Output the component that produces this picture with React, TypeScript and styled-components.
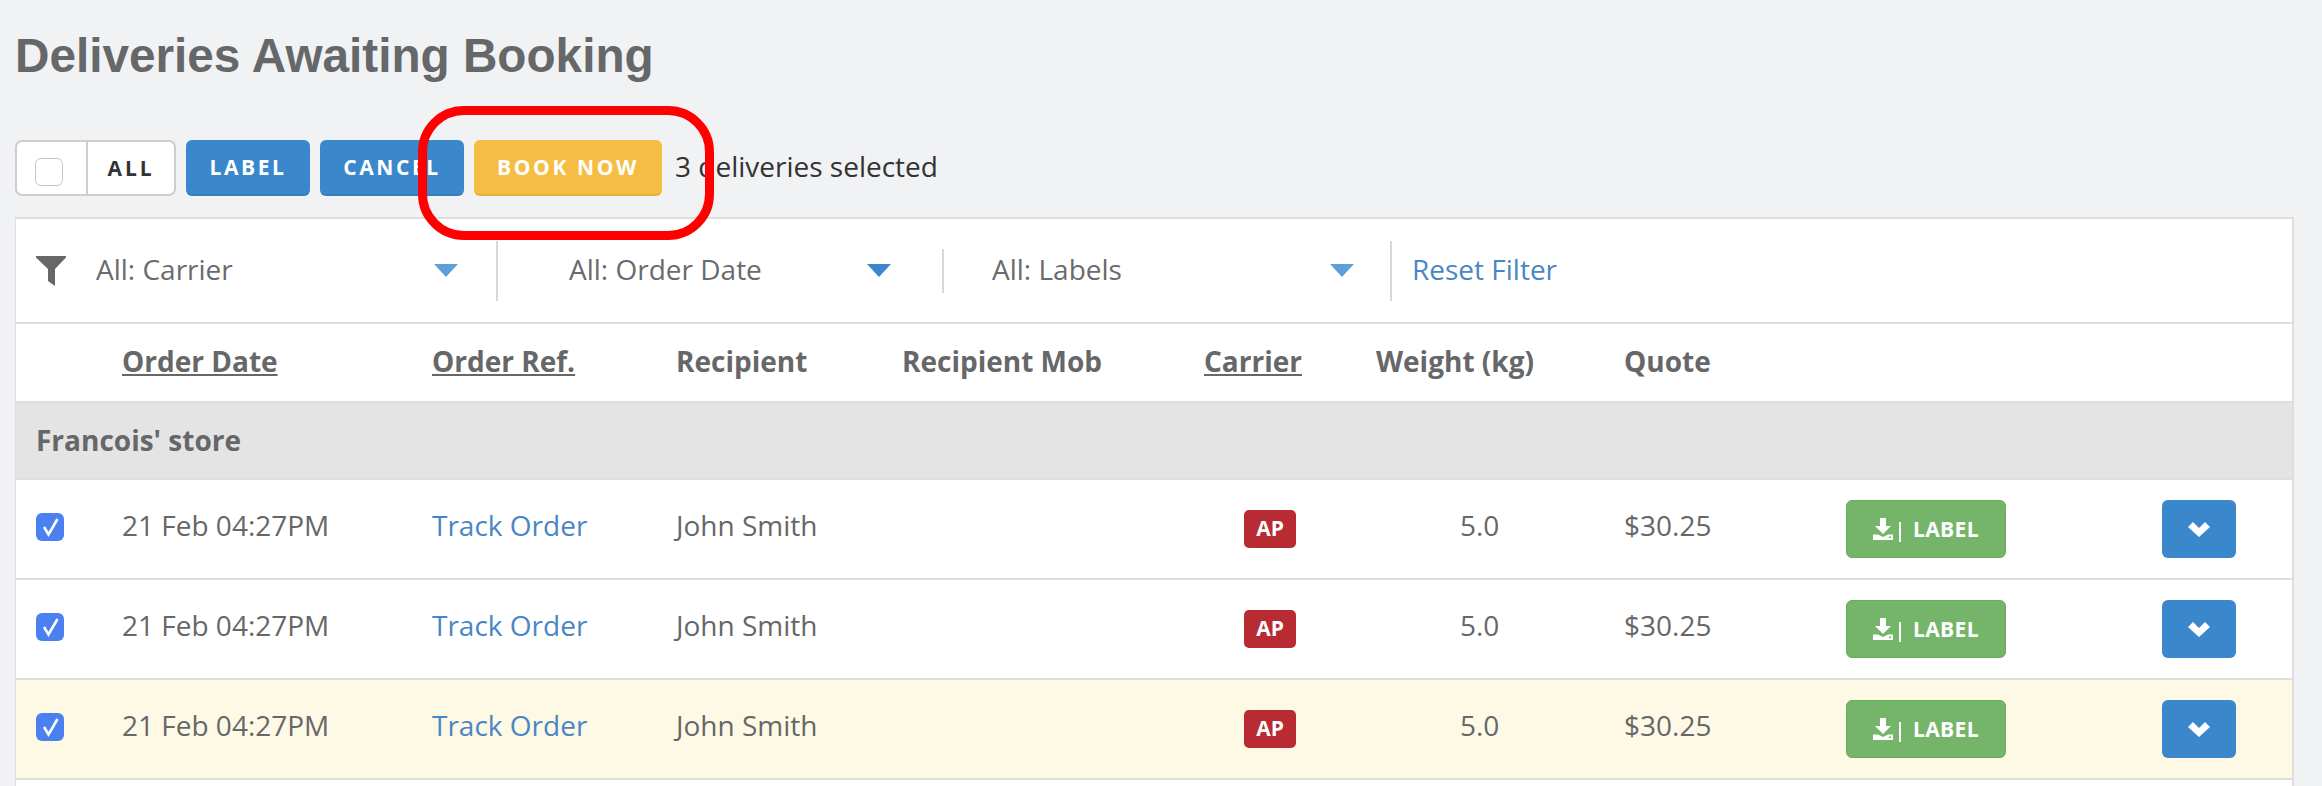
import React from "react";
import styled, { createGlobalStyle } from "styled-components";

const Global = createGlobalStyle`
  html, body { margin: 0; padding: 0; background: #f1f2f4; }
  body { font-family: "Open Sans", "Liberation Sans", sans-serif; color: #666769; overflow: hidden; }
`;

const Page = styled.div`
  position: relative;
  width: 2322px;
  height: 786px;
  box-sizing: border-box;
  padding: 0 28px 0 15px;
  overflow: hidden;
`;

const Title = styled.h1`
  margin: 0;
  padding-top: 28px;
  height: 140px;
  box-sizing: border-box;
  font: bold 47.7px/56px "Liberation Sans", Arial, sans-serif;
  color: #666769;
`;

const Toolbar = styled.div`
  display: flex;
  align-items: center;
  gap: 10px;
  height: 56px;
  margin-bottom: 21px;
`;

const AllToggle = styled.div`
  display: flex;
  width: 161px;
  height: 56px;
  box-sizing: border-box;
  background: #fff;
  border: 2px solid #cdcdcd;
  border-radius: 7px;
`;

const ToggleBox = styled.div`
  width: 71px;
  box-sizing: border-box;
  padding: 8px 5px 0 0;
  display: flex;
  align-items: center;
  justify-content: center;
  border-right: 2px solid #cdcdcd;
`;

const ToggleLabel = styled.div`
  flex: 1;
  display: flex;
  align-items: center;
  justify-content: center;
  font-size: 21px;
  font-weight: 700;
  letter-spacing: 3px;
  color: #333;
`;

const Check = styled.span<{ $on?: boolean }>`
  display: inline-flex;
  align-items: center;
  justify-content: center;
  width: 28px;
  height: 28px;
  box-sizing: border-box;
  border-radius: 6px;
  color: #fff;
  background: ${(p) => (p.$on ? "#4a80ef" : "#fff")};
  border: ${(p) => (p.$on ? "none" : "1.5px solid #c6c6c6")};
`;

const ActionButton = styled.div<{ $w: number; $bg: string }>`
  width: ${(p) => p.$w}px;
  height: 56px;
  display: flex;
  align-items: center;
  justify-content: center;
  box-sizing: border-box;
  border-radius: 6px;
  background: ${(p) => p.$bg};
  border-bottom: 2px solid rgba(0, 0, 0, 0.08);
  color: #fff;
  font-size: 21px;
  font-weight: 700;
  letter-spacing: 2.6px;
`;

const Selected = styled.div`
  margin-left: 3px;
  font-size: 28px;
  color: #333;
  padding-bottom: 4px;
`;

const Panel = styled.div`
  background: #fff;
  border: 2px solid #dedede;
  border-left-width: 1px;
  border-bottom: none;
  height: 600px;
`;

const FilterBar = styled.div`
  display: flex;
  align-items: center;
  height: 103px;
  border-bottom: 2px solid #dedede;
`;

const FilterIcon = styled.div`
  width: 80px;
  padding-left: 20px;
  box-sizing: border-box;
  display: flex;
`;

const FilterCell = styled.div<{ $w: number; $pad: number; $caretRight: number }>`
  position: relative;
  width: ${(p) => p.$w}px;
  padding-left: ${(p) => p.$pad}px;
  padding-right: ${(p) => p.$caretRight}px;
  box-sizing: border-box;
  display: flex;
  align-items: center;
  justify-content: space-between;
  font-size: 28px;
  color: #6a6b6d;
  padding-bottom: 3px;
`;

const Caret = styled.span<{ $c: string }>`
  display: block;
  width: 0;
  height: 0;
  border-left: 12px solid transparent;
  border-right: 12px solid transparent;
  border-top: 13px solid ${(p) => p.$c};
  margin-top: 2px;
`;

const Divider = styled.div<{ $h: number }>`
  width: 2px;
  height: ${(p) => p.$h}px;
  background: #d8d8d8;
  flex: none;
`;

const ResetLink = styled.a`
  margin-left: 20px;
  font-size: 28px;
  color: #4a86c5;
  padding-bottom: 3px;
`;

const COLUMNS = "106px 310px 244px 226px 302px 172px 248px 222px 316px 130px";

const HeaderRow = styled.div`
  display: grid;
  grid-template-columns: ${COLUMNS};
  align-items: center;
  height: 77px;
  border-bottom: 2px solid #dedede;
`;

const HeadCell = styled.div<{ $col: number; $link?: boolean }>`
  grid-column: ${(p) => p.$col};
  font-size: 28px;
  font-weight: 700;
  color: #666769;
  text-decoration: ${(p) => (p.$link ? "underline" : "none")};
  white-space: nowrap;
  padding-bottom: 3px;
`;

const GroupRow = styled.div`
  display: flex;
  align-items: center;
  height: 77px;
  box-sizing: border-box;
  padding: 0 0 2px 20px;
  background: #e4e4e4;
  border-bottom: 2px solid #dedede;
  font-size: 28px;
  font-weight: 700;
  color: #666769;
`;

const Row = styled.div<{ $bg: string }>`
  display: grid;
  grid-template-columns: ${COLUMNS};
  align-items: center;
  height: 100px;
  box-sizing: border-box;
  background: ${(p) => p.$bg};
  border-bottom: 2px solid #dedede;
`;

const CheckCell = styled.div`
  padding: 0 0 4px 20px;
  display: flex;
`;

const TextCell = styled.div<{ $indent?: number }>`
  font-size: 28px;
  color: #666769;
  padding-left: ${(p) => p.$indent ?? 0}px;
  padding-bottom: 8px;
  white-space: nowrap;
`;

const TrackLink = styled.a`
  font-size: 28px;
  color: #4a86c5;
  padding-bottom: 8px;
`;

const CarrierCell = styled.div`
  padding-left: 40px;
`;

const CarrierBadge = styled.div`
  width: 52px;
  height: 38px;
  display: flex;
  align-items: center;
  justify-content: center;
  box-sizing: border-box;
  padding-bottom: 2px;
  border-radius: 5px;
  background: #b92b32;
  color: #fff;
  font-size: 21px;
  font-weight: 700;
`;

const LabelButton = styled.div`
  width: 160px;
  height: 58px;
  display: flex;
  align-items: center;
  justify-content: center;
  gap: 6px;
  box-sizing: border-box;
  border: 1.5px solid #6bab5f;
  border-radius: 6px;
  background: #75b569;
  color: #fff;
  font-size: 21px;
  font-weight: 700;
  letter-spacing: 0.4px;
`;

const Pipe = styled.span`
  width: 2px;
  height: 20px;
  background: #fff;
  margin-right: 6px;
  margin-top: 5px;
`;

const ExpandButton = styled.div`
  width: 74px;
  height: 58px;
  display: flex;
  align-items: center;
  justify-content: center;
  box-sizing: border-box;
  border-radius: 6px;
  background: #3b87cb;
`;

const Annotation = styled.div`
  position: absolute;
  left: 418px;
  top: 106px;
  width: 296px;
  height: 134px;
  box-sizing: border-box;
  border: 9px solid #ff0000;
  border-radius: 46px;
  pointer-events: none;
`;

const ROWS = ["#ffffff", "#ffffff", "#fef9e5"];

const FunnelIcon = () => (
  <svg width="30" height="30" viewBox="0 0 30 30" fill="#666769">
    <path d="M0 0H30V1.5L19 13V30L12 25V13L0 1.5Z" />
  </svg>
);

const TickIcon = () => (
  <svg width="28" height="28" viewBox="0 0 28 28" fill="none" stroke="#fff" strokeWidth="2.6">
    <path d="M8 14L12.5 21.5L21.5 6" />
  </svg>
);

const DownloadIcon = () => (
  <svg width="20" height="22" viewBox="0 0 20 22" fill="#fff" fillRule="evenodd">
    <path d="M7 0H13V8H18L10 16L2 8H7Z" />
    <path d="M0 16.5H5L10 19L15 16.5H20V22H0ZM16 18.5V20H18V18.5Z" />
  </svg>
);

const ChevronIcon = () => (
  <svg width="22" height="15" viewBox="0 0 22 15" fill="#fff">
    <path d="M0 5L5 0L11 6L17 0L22 5L11 15Z" />
  </svg>
);

export default function App() {
  return (
    <Page>
      <Global />
      <Title>Deliveries Awaiting Booking</Title>
      <Toolbar>
        <AllToggle>
          <ToggleBox>
            <Check />
          </ToggleBox>
          <ToggleLabel>ALL</ToggleLabel>
        </AllToggle>
        <ActionButton $w={124} $bg="#3b87cb">LABEL</ActionButton>
        <ActionButton $w={144} $bg="#3b87cb">CANCEL</ActionButton>
        <ActionButton $w={188} $bg="#f6bd44">BOOK NOW</ActionButton>
        <Selected>3 deliveries selected</Selected>
      </Toolbar>
      <Panel>
        <FilterBar>
          <FilterIcon>
            <FunnelIcon />
          </FilterIcon>
          <FilterCell $w={400} $pad={0} $caretRight={38}>
            All: Carrier
            <Caret $c="#5f9fd8" />
          </FilterCell>
          <Divider $h={60} />
          <FilterCell $w={444} $pad={71} $caretRight={51}>
            All: Order Date
            <Caret $c="#3b87cb" />
          </FilterCell>
          <Divider $h={44} />
          <FilterCell $w={446} $pad={48} $caretRight={36}>
            All: Labels
            <Caret $c="#5f9fd8" />
          </FilterCell>
          <Divider $h={60} />
          <ResetLink>Reset Filter</ResetLink>
        </FilterBar>
        <HeaderRow>
          <HeadCell $col={2} $link>Order Date</HeadCell>
          <HeadCell $col={3} $link>Order Ref.</HeadCell>
          <HeadCell $col={4}>Recipient</HeadCell>
          <HeadCell $col={5}>Recipient Mob</HeadCell>
          <HeadCell $col={6} $link>Carrier</HeadCell>
          <HeadCell $col={7}>Weight (kg)</HeadCell>
          <HeadCell $col={8}>Quote</HeadCell>
        </HeaderRow>
        <GroupRow>Francois' store</GroupRow>
        {ROWS.map((bg, i) => (
          <Row key={i} $bg={bg}>
            <CheckCell>
              <Check $on>
                <TickIcon />
              </Check>
            </CheckCell>
            <TextCell>21 Feb 04:27PM</TextCell>
            <TrackLink>Track Order</TrackLink>
            <TextCell>John Smith</TextCell>
            <TextCell />
            <CarrierCell>
              <CarrierBadge>AP</CarrierBadge>
            </CarrierCell>
            <TextCell $indent={84}>5.0</TextCell>
            <TextCell>$30.25</TextCell>
            <LabelButton>
              <DownloadIcon />
              <Pipe />
              LABEL
            </LabelButton>
            <ExpandButton>
              <ChevronIcon />
            </ExpandButton>
          </Row>
        ))}
      </Panel>
      <Annotation />
    </Page>
  );
}
